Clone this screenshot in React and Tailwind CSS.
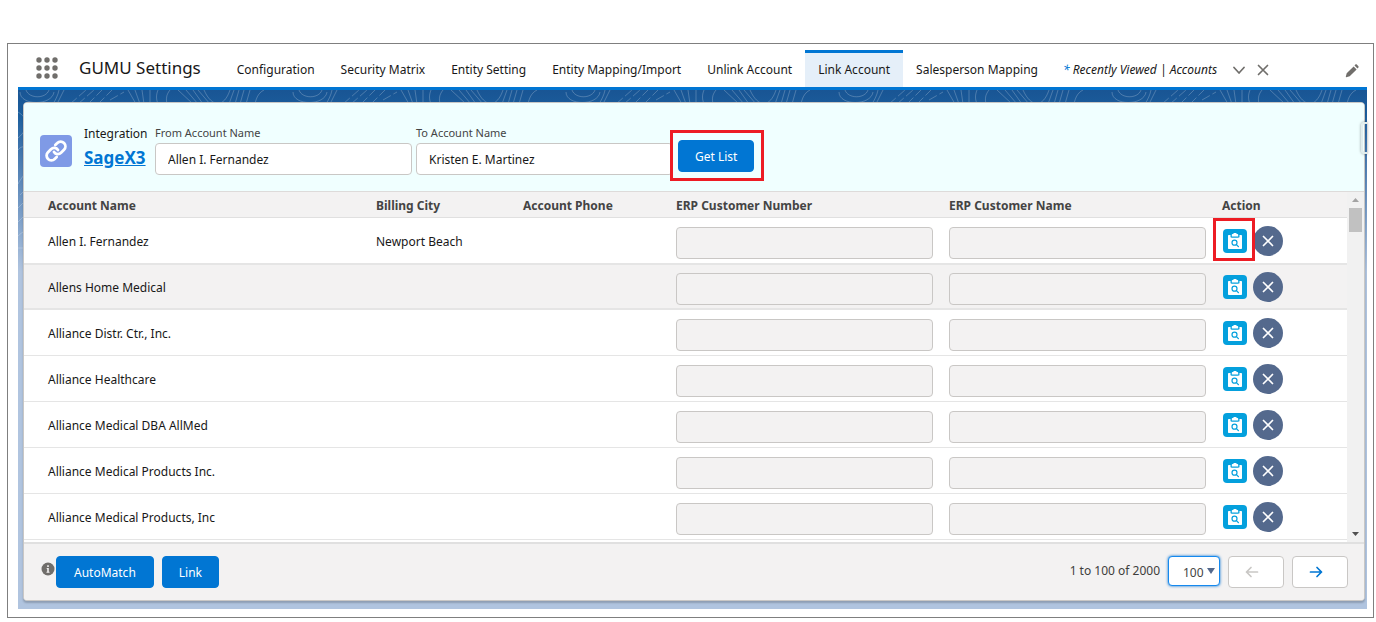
import React from 'react';

const TABS = [
  { label: 'Configuration' },
  { label: 'Security Matrix' },
  { label: 'Entity Setting' },
  { label: 'Entity Mapping/Import' },
  { label: 'Unlink Account' },
  { label: 'Link Account', active: true },
  { label: 'Salesperson Mapping' },
];

const ROWS = [
  { name: 'Allen I. Fernandez', city: 'Newport Beach', phone: '' },
  { name: 'Allens Home Medical', city: '', phone: '', selected: true },
  { name: 'Alliance Distr. Ctr., Inc.', city: '', phone: '' },
  { name: 'Alliance Healthcare', city: '', phone: '' },
  { name: 'Alliance Medical DBA AllMed', city: '', phone: '' },
  { name: 'Alliance Medical Products Inc.', city: '', phone: '' },
  { name: 'Alliance Medical Products, Inc', city: '', phone: '' },
];

function AppLauncherIcon() {
  return (
    <svg className="h-[22px] w-[22px] shrink-0" viewBox="0 0 22 22" fill="#706e6b" aria-hidden="true">
      {[3, 11, 19].map((y) => [3, 11, 19].map((x) => <circle key={`${x}-${y}`} cx={x} cy={y} r="2.7" />))}
    </svg>
  );
}

function ChevronIcon() {
  return (
    <svg className="h-3 w-3" viewBox="0 0 12 12" fill="none" stroke="#706e6b" strokeWidth="1.7" strokeLinecap="round" strokeLinejoin="round">
      <path d="M1 3.5 6 9l5-5.500" />
    </svg>
  );
}

function CrossIcon({ className }) {
  return (
    <svg className={className} viewBox="0 0 12 12" fill="none" stroke="currentColor" strokeWidth="1.7" strokeLinecap="round">
      <path d="M1.500 1.500l9 9M10.500 1.500l-9 9" />
    </svg>
  );
}

function PencilIcon() {
  return (
    <svg className="h-[14px] w-[14px]" viewBox="0 0 14 14" fill="#706e6b">
      <path d="M1.700 9.300 8.600 2.400l3 3-6.900 6.900-3.500.9c-.3.1-.5-.2-.4-.4z" />
      <path d="M9.500 1.500l.9-.9c.4-.4 1-.4 1.400 0l1.600 1.600c.4.4.4 1 0 1.400l-.9.9z" />
    </svg>
  );
}

function LinkIcon() {
  return (
    <svg className="h-6 w-6" viewBox="0 0 24 24" fill="none" stroke="#fff" strokeWidth="2.800" strokeLinecap="round" strokeLinejoin="round">
      <path d="M10 13a4.500 4.500 0 0 0 7 .8l3-3a4.700 4.700 0 0 0-6.700-6.700l-2 1.900" />
      <path d="M14 11a4.500 4.500 0 0 0-7-.8l-3 3a4.700 4.700 0 0 0 6.700 6.700l2-1.900" />
    </svg>
  );
}

function ClipboardSearchIcon() {
  return (
    <svg className="h-6 w-6" viewBox="0 0 24 24">
      <path fill="#fff" d="M6 6h1.500v1.500c0 .8.500 1.200 1.200 1.200h6.600c.7 0 1.200-.4 1.200-1.200V6H18c.6 0 1 .4 1 1v12c0 .6-.4 1-1 1H6c-.6 0-1-.4-1-1V7c0-.6.400-1 1-1z" />
      <path fill="#fff" d="M8.800 7.500V5.800c0-.4.300-.7.700-.7h.5c.2-.7 1-1.100 2-1.100s1.800.4 2 1.100h.5c.4 0 .7.300.7.700v1.700z" />
      <circle cx="11.500" cy="13.700" r="2.500" fill="none" stroke="#04a0dd" strokeWidth="1.200" />
      <path d="M13.400 15.600l2 2" stroke="#04a0dd" strokeWidth="1.300" strokeLinecap="round" />
    </svg>
  );
}

function ArrowIcon({ className }) {
  return (
    <svg className={className} viewBox="0 0 14 12" fill="none" stroke="currentColor" strokeWidth="1.700" strokeLinecap="round" strokeLinejoin="round">
      <path d="M1.500 6h11M8 1.500 12.500 6 8 10.500" />
    </svg>
  );
}

// topographic lines behind the card
function Backdrop() {
  return (
    <svg className="absolute inset-0 h-full w-full" aria-hidden="true">
      <defs>
        <pattern id="topo" width="273" height="170" patternUnits="userSpaceOnUse">
          <g fill="none" stroke="#fff" strokeOpacity="0.22">
            <path d="M2 2c0 14 32 14 34 0M8 0c3 9 20 9 23 0M41 0c-1 5-3 9-6 14M39 14l7-14" />
            <path d="M52 14L68 0M60 14L76 0M70 14L84 0M80 14L94 0M92 10l14-8" strokeDasharray="9 3" />
            <path d="M110 0l8 14M117 0l5 14M124 0l2 14M132 0v14M140 0c-2 5-2 9 0 14M152 0c-4 5-4 9-3 14" />
            <path d="M160 0l15 14M168 0l12 14M175 0l10 14M180 0l12 14M186 0c8 18 20 18 26 0M216 0l-5 14M221 0l-4 14M226 0l-4 14M232 0l-4 14M246 0c-6 3-8 9-9 14" />
            <path d="M0 22c10 6 12 16 0 26M0 60c6-8 14 0 10 14s-6 12-10 20M2 105l8-8M0 118l10-10M0 132l10-10M0 146c4-4 8-6 12-7M0 158h12" />
          </g>
        </pattern>
      </defs>
      <rect width="100%" height="170" fill="url(#topo)" />
    </svg>
  );
}

function NavBar() {
  return (
    <header className="flex h-[46px] items-stretch border-b-3 border-[#0176d3] pl-[18px] pr-2">
      <div className="flex items-center gap-[21px] pt-[5px]">
        <button type="button" aria-label="App Launcher"><AppLauncherIcon /></button>
        <h1 className="text-[17px] text-[#181818]">GUMU Settings</h1>
      </div>
      <nav className="ml-[23px] flex items-stretch pt-[6px]">
        {TABS.map((tab) => (
          <a key={tab.label} href="#" aria-current={tab.active ? 'page' : undefined}
            className={tab.active
              ? 'flex items-center border-t-3 border-[#0176d3] bg-[#e5eff9] px-[13px] pb-px text-[#181818]'
              : 'flex items-center border-t-3 border-transparent px-[13px] pb-px text-[#181818]'}>
            {tab.label}
          </a>
        ))}
        <div className="flex items-center border-t-3 border-transparent pb-px pl-3">
          <a href="#" className="italic text-[#181818]"><span className="text-[#0176d3]">*</span> Recently Viewed | Accounts</a>
          <button type="button" aria-label="Tab menu" className="ml-4"><ChevronIcon /></button>
          <button type="button" aria-label="Close tab" className="ml-3 text-[#706e6b]"><CrossIcon className="h-3 w-3" /></button>
        </div>
      </nav>
      <button type="button" aria-label="Edit navigation" className="ml-auto pt-[10px]"><PencilIcon /></button>
    </header>
  );
}

function FilterBar() {
  return (
    <div className="flex h-[89px] items-start border-b border-[#dddbda] bg-[#f0ffff] px-4">
      <div className="mt-8 flex h-8 w-8 items-center justify-center rounded bg-[#7f9ae6]"><LinkIcon /></div>
      <div className="ml-3 mt-[23px] w-[63px] leading-4">
        <p>Integration</p>
        <a href="#" className="mt-1 block text-[17px] leading-6 font-bold text-[#0176d3] underline">SageX3</a>
      </div>
      <div className="ml-2 mt-[22px] flex gap-1">
        <div className="w-[257px]">
          <label htmlFor="from-account" className="block h-[18px] text-[11px] leading-4 text-[#444]">From Account Name</label>
          <input id="from-account" type="text" defaultValue="Allen I. Fernandez"
            className="h-8 w-full rounded border border-[#c9c7c5] bg-white px-3" />
        </div>
        <div className="w-[257px]">
          <label htmlFor="to-account" className="block h-[18px] text-[11px] leading-4 text-[#444]">To Account Name</label>
          <input id="to-account" type="text" defaultValue="Kristen E. Martinez"
            className="h-8 w-full rounded border border-[#c9c7c5] bg-white px-3" />
        </div>
      </div>
      <div className="relative z-10 -ml-[3px] mt-[27px] border-3 border-[#ed1c24] bg-[#f0ffff] pt-[7px] pr-[7px] pb-[6px] pl-[5px]">
        <button type="button" className="block h-8 rounded border border-[#0176d3] bg-[#0176d3] px-4 pt-[2px] text-white">Get List</button>
      </div>
    </div>
  );
}

function AccountTable() {
  return (
    <div className="flex bg-white">
      <div className="min-w-0 flex-1 pb-[2px]">
        <table className="w-full table-fixed border-separate border-spacing-0 text-left">
          <colgroup>
            <col className="w-[344px]" />
            <col className="w-[147px]" />
            <col className="w-[153px]" />
            <col className="w-[273px]" />
            <col className="w-[273px]" />
            <col className="w-[133px]" />
          </colgroup>
          <thead>
            <tr className="h-[26px] bg-[#f3f2f2] text-[#444] *:border-b *:border-[#e0e0e0] *:px-2 *:pt-[2px] *:font-bold">
              <th className="pl-6!">Account Name</th>
              <th>Billing City</th>
              <th>Account Phone</th>
              <th>ERP Customer Number</th>
              <th>ERP Customer Name</th>
              <th>Action</th>
            </tr>
          </thead>
          <tbody>
            {ROWS.map((row, i) => (
              <tr key={row.name}
                className={row.selected
                  ? 'h-[46px] bg-[#f3f2f2] *:border-b *:border-[#e5e5e5] *:px-2 *:shadow-[inset_0_1px_0_#e5e5e5,inset_0_-1px_0_#e5e5e5]'
                  : 'h-[46px] *:border-b *:border-[#e5e5e5] *:px-2'}>
                <td className="pt-[2px] pl-6!">{row.name}</td>
                <td className="pt-[2px]">{row.city}</td>
                <td className="pt-[2px]">{row.phone}</td>
                <td>
                  <input type="text" disabled aria-label={`ERP customer number for ${row.name}`}
                    className="mt-1 block h-8 w-full rounded border border-[#c9c7c5] bg-[#f3f2f2]" />
                </td>
                <td>
                  <input type="text" disabled aria-label={`ERP customer name for ${row.name}`}
                    className="mt-1 block h-8 w-full rounded border border-[#c9c7c5] bg-[#f3f2f2]" />
                </td>
                <td>
                  <div className="flex items-center gap-[6px] pl-px">
                    <div className="relative">
                      <button type="button" aria-label={`Search ${row.name}`} className="block rounded bg-[#04a0dd]">
                        <ClipboardSearchIcon />
                      </button>
                      {i === 0 && <span className="pointer-events-none absolute -top-[11px] -right-2 -bottom-2 -left-[10px] z-10 border-3 border-[#ed1c24]" />}
                    </div>
                    <button type="button" aria-label={`Clear ${row.name}`}
                      className="flex h-[30px] w-[30px] items-center justify-center rounded-full bg-[#54698d] text-white">
                      <CrossIcon className="h-3 w-3" />
                    </button>
                  </div>
                </td>
              </tr>
            ))}
          </tbody>
        </table>
      </div>
      <div className="flex w-[17px] flex-col items-center bg-[#f1f1f1]">
        <svg className="h-4 w-[17px]" viewBox="0 0 17 16"><path d="M5 10h7l-3.500-4z" fill="#a3a3a3" /></svg>
        <div className="h-6 w-[13px] bg-[#c1c1c1]" />
        <svg className="mt-auto h-4 w-[17px]" viewBox="0 0 17 16"><path d="M5 6h7l-3.500 4z" fill="#505050" /></svg>
      </div>
    </div>
  );
}

function Footer() {
  return (
    <footer className="flex h-[58px] items-center border-t-2 border-[#e0e0e0] bg-[#f3f2f2] pl-[17px] pr-4">
      <svg className="mb-[6px] h-[14px] w-[14px]" viewBox="0 0 14 14" aria-hidden="true">
        <circle cx="7" cy="7" r="6.500" fill="#706e6b" />
        <path d="M6.200 3.300h1.600v1.600H6.200zM5.700 6h2.100v3.800h.7v.9h-3v-.9h.7V6.900h-.5z" fill="#f3f2f2" />
      </svg>
      <button type="button" className="ml-px h-8 rounded border border-[#0176d3] bg-[#0176d3] px-[17px] pt-[2px] text-white">AutoMatch</button>
      <button type="button" className="ml-2 h-8 rounded border border-[#0176d3] bg-[#0176d3] px-4 pt-[2px] text-white">Link</button>
      <p className="mb-[2px] ml-auto text-[#3e3e3c]">1 to 100 of 2000</p>
      <div className="relative mb-[2px] ml-2">
        <select aria-label="Rows per page" defaultValue="100"
          className="block h-[30px] w-[52px] appearance-none rounded border border-[#1589ee] bg-white pt-1 pl-[14px] text-[#444] shadow-[0_0_3px_#0070d2]">
          <option>50</option>
          <option>100</option>
          <option>200</option>
        </select>
        <svg className="pointer-events-none absolute top-3 right-[5px] h-[6px] w-2" viewBox="0 0 8 6"><path d="M0 0h8L4 6z" fill="#54698d" /></svg>
      </div>
      <button type="button" disabled aria-label="Previous page"
        className="ml-2 flex h-8 w-14 items-center justify-center rounded border border-[#c9c7c5] bg-white text-[#c9c7c5]">
        <ArrowIcon className="mr-2 h-3 w-[14px] rotate-180" />
      </button>
      <button type="button" aria-label="Next page"
        className="ml-2 flex h-8 w-14 items-center justify-center rounded border border-[#c9c7c5] bg-white text-[#0176d3]">
        <ArrowIcon className="mr-2 h-3 w-[14px]" />
      </button>
    </footer>
  );
}

export default function App() {
  return (
    <div className="min-h-screen bg-white pt-[43px] pr-[2px] pb-1 pl-[7px] font-['Segoe_UI','Noto_Sans',sans-serif] text-xs leading-5 text-[#181818]">
      <div className="border border-[#7f7f7f] pr-[6px] pb-2 pl-[10px]">
        <NavBar />
        <main className="relative bg-[#b0c4df] bg-linear-to-b from-[#195594] from-0% via-[#1b5f9e] via-5% to-[#b0c4df] to-35% pt-3 pr-[2px] pb-2 pl-[5px]">
          <Backdrop />
          <section className="relative overflow-hidden rounded border border-[#c9c7c5] bg-white shadow-[0_2px_2px_rgba(0,0,0,0.2)]">
            <FilterBar />
            <AccountTable />
            <Footer />
          </section>
          {/* collapsed side panel handle */}
          <div className="absolute top-8 right-0 h-8 w-[6px] rounded-l border-2 border-r-0 border-[#e2eeee] shadow-[0_0_3px_rgba(0,0,0,0.4)]" />
        </main>
      </div>
    </div>
  );
}
